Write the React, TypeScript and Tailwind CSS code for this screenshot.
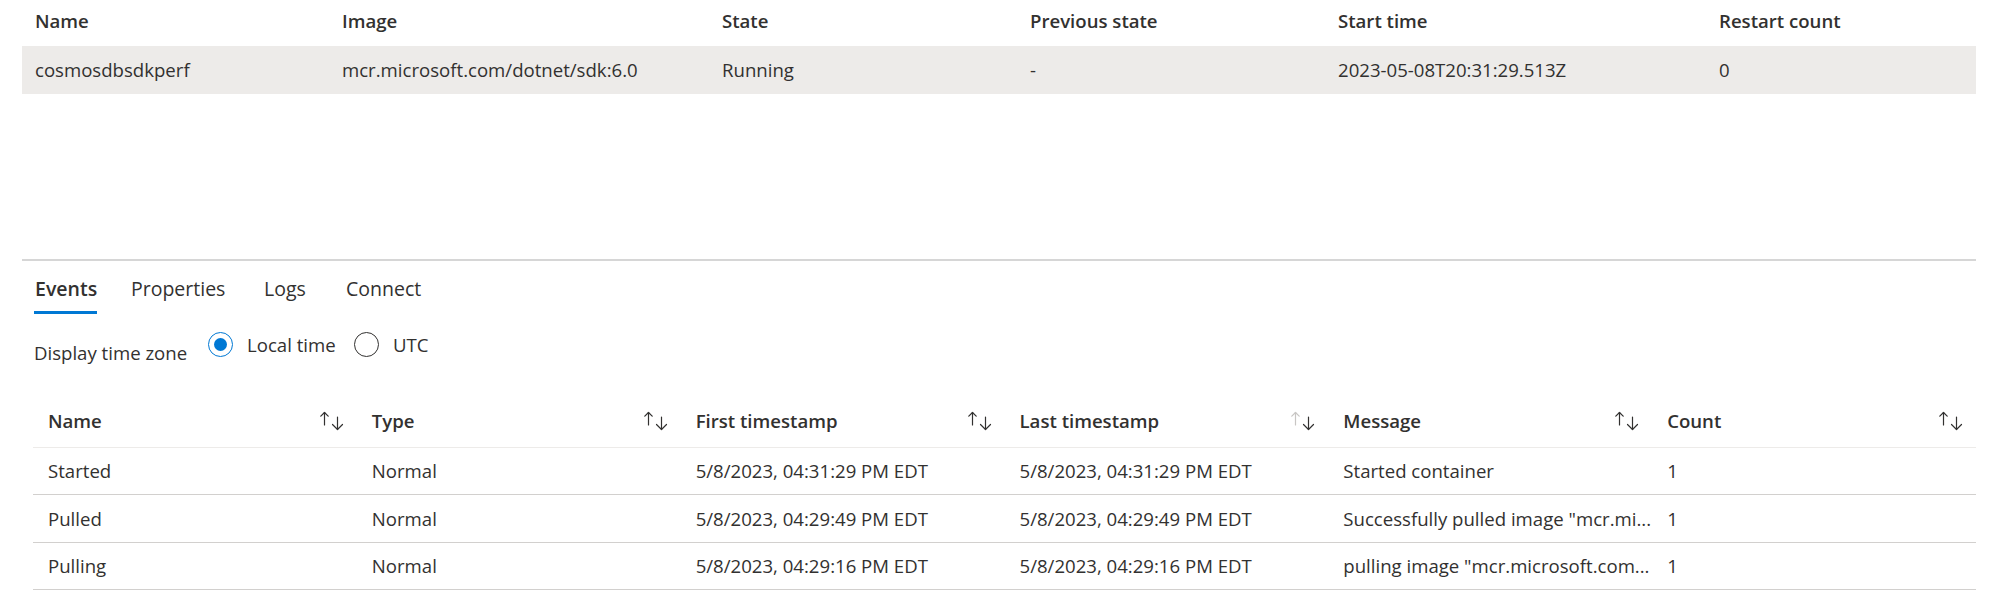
import React from "react";

const topCols = "grid grid-cols-[307px_380px_308px_308px_381px_1fr]";

function SortIcon({ dimUp = false }: { dimUp?: boolean }) {
  return (
    <svg width="24" height="20" viewBox="0 0 24 20" fill="none" strokeWidth="1.2" strokeLinecap="round" strokeLinejoin="round">
      <g stroke={dimUp ? "#c8c6c4" : "#323130"}>
        <path d="M4.5 1.5V14" />
        <path d="M0.8 5.2L4.5 1.5L8.2 5.2" />
      </g>
      <g stroke="#323130">
        <path d="M17.5 6V18.5" />
        <path d="M12.5 13.5L17.5 18.5L22.5 13.5" />
      </g>
    </svg>
  );
}

const events = [
  ["Started", "Normal", "5/8/2023, 04:31:29 PM EDT", "5/8/2023, 04:31:29 PM EDT", "Started container", "1"],
  ["Pulled", "Normal", "5/8/2023, 04:29:49 PM EDT", "5/8/2023, 04:29:49 PM EDT", "Successfully pulled image \"mcr.mi...", "1"],
  ["Pulling", "Normal", "5/8/2023, 04:29:16 PM EDT", "5/8/2023, 04:29:16 PM EDT", "pulling image \"mcr.microsoft.com...", "1"],
];
const rowHeights = ["h-[47px]", "h-[48px]", "h-[47px]"];

const headers = ["Name", "Type", "First timestamp", "Last timestamp", "Message", "Count"];

export default function App() {
  return (
    <div className="w-[1992px] h-[614px] bg-white text-[#323130] text-[18.6px] font-['Open_Sans',sans-serif] overflow-hidden">
      {/* Container table */}
      <div className="pl-[22px] pr-[16px]">
        <div className={`${topCols} h-[42px] items-center font-semibold`}>
          {["Name", "Image", "State", "Previous state", "Start time", "Restart count"].map((h) => (
            <div key={h} className="pl-[13px] leading-[26px]">{h}</div>
          ))}
        </div>
        <div className={`${topCols} mt-[4px] h-[48px] items-center bg-[#edebe9]`}>
          {["cosmosdbsdkperf", "mcr.microsoft.com/dotnet/sdk:6.0", "Running", "-", "2023-05-08T20:31:29.513Z", "0"].map((c, i) => (
            <div key={i} className="pl-[13px] leading-[26px]">{c}</div>
          ))}
        </div>
      </div>

      {/* divider */}
      <div className="mt-[165px] ml-[22px] mr-[16px] h-[2px] bg-[#d6d6d6]" />

      {/* tabs */}
      <div className="flex h-[53px] pl-[34px]">
        <div className="w-[97px] flex">
          <div className="flex flex-col">
            <div className="pt-[15px] leading-[26px] text-[19.5px] font-semibold pl-[1px]">Events</div>
            <div className="mt-auto h-[3px] bg-[#0078d4]" />
          </div>
        </div>
        <div className="w-[133px] pt-[15px] leading-[26px] text-[19.5px]">Properties</div>
        <div className="w-[82px] pt-[15px] leading-[26px] text-[19.5px]">Logs</div>
        <div className="pt-[15px] leading-[26px] text-[19.5px]">Connect</div>
      </div>

      {/* time zone */}
      <div className="flex items-start h-[60px] pl-[34px]">
        <div className="w-[174px] pt-[26px] leading-[26px]">Display time zone</div>
        <div className="flex items-start pt-[18px]">
          <div className="w-[25px] h-[25px] rounded-full border border-[#0078d4] flex items-center justify-center">
            <div className="w-[13px] h-[13px] rounded-full bg-[#0078d4]" />
          </div>
          <div className="ml-[14px] w-[107px] leading-[25px]">Local time</div>
          <div className="w-[25px] h-[25px] rounded-full border border-[#323130]" />
          <div className="ml-[14px] leading-[25px]">UTC</div>
        </div>
      </div>

      {/* events table */}
      <div className="mt-[26px] ml-[33px] mr-[16px]">
        <div className="grid grid-cols-6 h-[48px] border-b border-[#edebe9] font-semibold">
          {headers.map((h, i) => (
            <div key={h} className="flex items-center justify-between pl-[15px] pr-[13px] pb-[6px]">
              <span className="leading-[26px]">{h}</span>
              <SortIcon dimUp={i === 3} />
            </div>
          ))}
        </div>
        {events.map((row, r) => (
          <div key={r} className={`grid grid-cols-6 ${rowHeights[r]} border-b border-[#d2d0ce] items-center`}>
            {row.map((c, i) => (
              <div key={i} className="pl-[15px] pr-[8px] leading-[26px] whitespace-nowrap overflow-hidden">{c}</div>
            ))}
          </div>
        ))}
      </div>
    </div>
  );
}
